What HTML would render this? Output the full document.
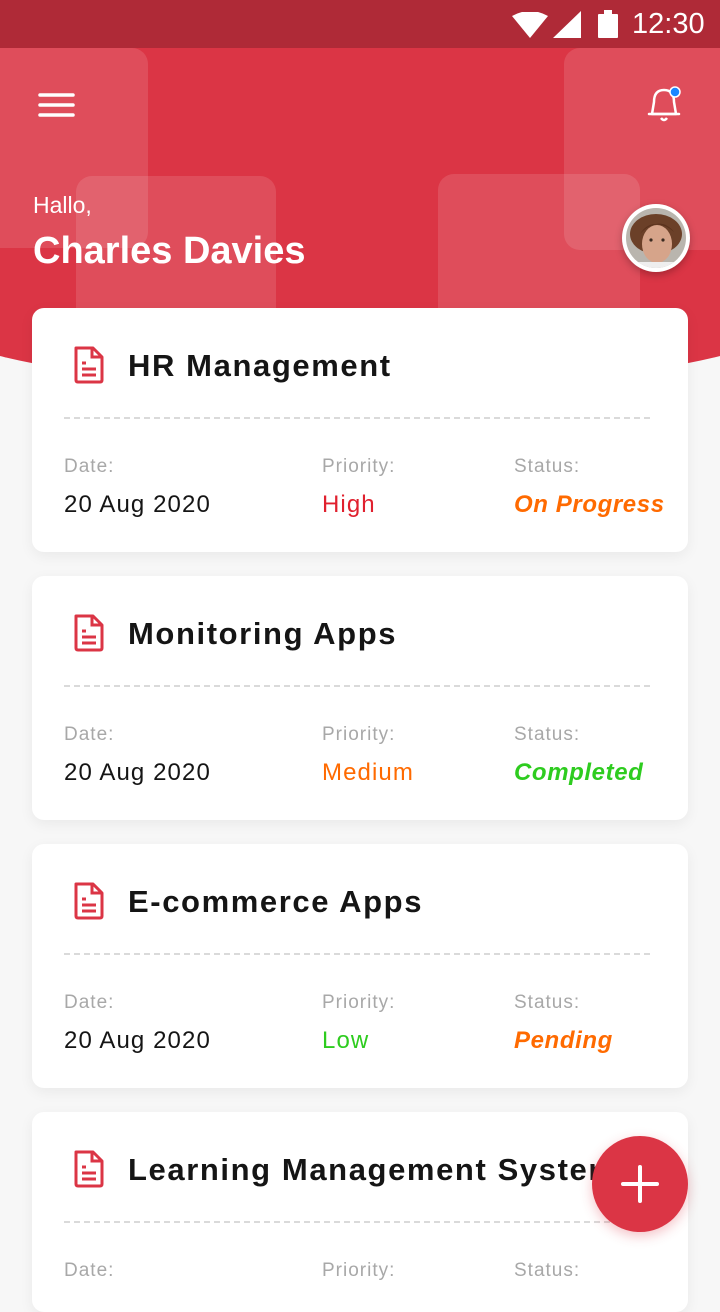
<!DOCTYPE html>
<html><head><meta charset="utf-8"><style>
*{margin:0;padding:0;box-sizing:border-box}
body{width:720px;height:1282px;overflow:hidden;background:#f7f7f7;font-family:"Liberation Sans",sans-serif;position:relative}
.status{position:absolute;left:0;top:0;width:720px;height:48px;background:#af2a37;z-index:5}
.hdr{position:absolute;left:-100px;top:0;width:920px;height:390px;background:#db3545;border-radius:0 0 460px 460px/0 0 90px 90px;overflow:hidden}
.dec{position:absolute;background:rgba(255,255,255,0.12);border-radius:16px}
.card{position:absolute;left:32px;width:656px;height:244px;background:#fff;border-radius:12px;box-shadow:0 4px 14px rgba(0,0,0,0.06)}
.card .ic{position:absolute;left:40px;top:38px}
.card h2{position:absolute;left:96px;top:40px;font-size:31px;font-weight:bold;color:#151515;white-space:nowrap;letter-spacing:1.6px}
.card .dash{position:absolute;left:32px;right:38px;top:109px;border-top:2px dashed #dadada}
.lab{position:absolute;top:148px;font-size:19px;color:#a8a8a8;letter-spacing:1px}
.val{position:absolute;top:183px;font-size:24px;color:#151515;letter-spacing:1.1px}
.it{font-style:italic;font-weight:bold;letter-spacing:0.6px}
</style></head><body>
<div class="hdr">
 <div class="dec" style="left:88px;top:48px;width:160px;height:200px;border-radius:0 16px 16px 0"></div>
 <div class="dec" style="left:176px;top:176px;width:200px;height:260px"></div>
 <div class="dec" style="left:538px;top:174px;width:202px;height:260px"></div>
 <div class="dec" style="left:664px;top:48px;width:260px;height:202px"></div>
</div>
<div class="status">
 <svg style="position:absolute;left:512px;top:12px" width="40" height="26" viewBox="0 0 40 26"><path d="M0 4 Q18 -6 36 4 L18 26Z" fill="#fff"/></svg>
 <svg style="position:absolute;left:553px;top:11px" width="30" height="28"><path d="M28 0 V27 H0Z" fill="#fff"/></svg>
 <div style="position:absolute;left:598px;top:14px;width:20px;height:24px;background:#fff;border-radius:1px"></div>
 <div style="position:absolute;left:604px;top:10px;width:8px;height:5px;background:#fff"></div>
 <div style="position:absolute;left:632px;top:8px;color:#fff;font-size:29px">12:30</div>
</div>
<svg style="position:absolute;left:38px;top:92px" width="38" height="26"><g stroke="#fff" stroke-width="3.5" stroke-linecap="round"><line x1="2" y1="3" x2="35" y2="3"/><line x1="2" y1="13" x2="35" y2="13"/><line x1="2" y1="23" x2="35" y2="23"/></g></svg>
<svg style="position:absolute;left:644px;top:82px" width="44" height="42" viewBox="0 0 44 42"><path d="M20 8 Q10 8 10 20 L8 32 H32 L30 20 Q30 8 20 8Z" fill="none" stroke="#fff" stroke-width="2.5" stroke-linejoin="round"/><path d="M5 32 H35" stroke="#fff" stroke-width="2.5" stroke-linecap="round"/><path d="M17 36 Q20 40 23 36" fill="none" stroke="#fff" stroke-width="2.5"/><circle cx="31" cy="10" r="5" fill="#1a86ff" stroke="#fff" stroke-width="1.5"/></svg>
<div style="position:absolute;left:33px;top:192px;color:#fff;font-size:23px">Hallo,</div>
<div style="position:absolute;left:33px;top:230px;color:#fff;font-size:38px;font-weight:bold">Charles Davies</div>
<div style="position:absolute;left:622px;top:204px;width:68px;height:68px;border-radius:50%;background:#fff;box-shadow:0 3px 8px rgba(0,0,0,0.25)">
 <svg style="position:absolute;left:4px;top:4px" width="60" height="60" viewBox="0 0 60 60"><clipPath id="c"><circle cx="30" cy="30" r="30"/></clipPath><g clip-path="url(#c)"><rect width="60" height="60" fill="#b9b5ae"/><ellipse cx="30" cy="26" rx="26" ry="20" fill="#6b4028"/><ellipse cx="31" cy="36" rx="15" ry="19" fill="#d6a48a"/><path d="M14 26 Q30 8 48 24 Q40 14 30 16 Q20 16 14 26Z" fill="#5a321d"/><circle cx="25" cy="32" r="1.6" fill="#3a2a20"/><circle cx="37" cy="32" r="1.6" fill="#3a2a20"/><rect x="0" y="54" width="60" height="6" fill="#eee"/></g></svg>
</div>

<div class="card" style="top:308px">
 <svg class="ic" width="34" height="38" viewBox="0 0 34 38"><path d="M4 2 H21 L30 11 V34 Q30 36 28 36 H6 Q4 36 4 34Z" fill="none" stroke="#db3545" stroke-width="3" stroke-linejoin="round"/><path d="M20 2 V11 H30" fill="none" stroke="#db3545" stroke-width="3"/><g stroke="#db3545" stroke-width="3"><line x1="10" y1="17" x2="14" y2="17"/><line x1="10" y1="23" x2="24" y2="23"/><line x1="10" y1="29" x2="24" y2="29"/></g></svg>
 <h2>HR Management</h2><div class="dash"></div>
 <div class="lab" style="left:32px">Date:</div><div class="lab" style="left:290px">Priority:</div><div class="lab" style="left:482px">Status:</div>
 <div class="val" style="left:32px">20 Aug 2020</div><div class="val" style="left:290px;color:#e0202e">High</div><div class="val it" style="left:482px;color:#ff6a00">On Progress</div>
</div>
<div class="card" style="top:576px">
 <svg class="ic" width="34" height="38" viewBox="0 0 34 38"><path d="M4 2 H21 L30 11 V34 Q30 36 28 36 H6 Q4 36 4 34Z" fill="none" stroke="#db3545" stroke-width="3" stroke-linejoin="round"/><path d="M20 2 V11 H30" fill="none" stroke="#db3545" stroke-width="3"/><g stroke="#db3545" stroke-width="3"><line x1="10" y1="17" x2="14" y2="17"/><line x1="10" y1="23" x2="24" y2="23"/><line x1="10" y1="29" x2="24" y2="29"/></g></svg>
 <h2>Monitoring Apps</h2><div class="dash"></div>
 <div class="lab" style="left:32px">Date:</div><div class="lab" style="left:290px">Priority:</div><div class="lab" style="left:482px">Status:</div>
 <div class="val" style="left:32px">20 Aug 2020</div><div class="val" style="left:290px;color:#ff6a00">Medium</div><div class="val it" style="left:482px;color:#2ecc1f">Completed</div>
</div>
<div class="card" style="top:844px">
 <svg class="ic" width="34" height="38" viewBox="0 0 34 38"><path d="M4 2 H21 L30 11 V34 Q30 36 28 36 H6 Q4 36 4 34Z" fill="none" stroke="#db3545" stroke-width="3" stroke-linejoin="round"/><path d="M20 2 V11 H30" fill="none" stroke="#db3545" stroke-width="3"/><g stroke="#db3545" stroke-width="3"><line x1="10" y1="17" x2="14" y2="17"/><line x1="10" y1="23" x2="24" y2="23"/><line x1="10" y1="29" x2="24" y2="29"/></g></svg>
 <h2>E-commerce Apps</h2><div class="dash"></div>
 <div class="lab" style="left:32px">Date:</div><div class="lab" style="left:290px">Priority:</div><div class="lab" style="left:482px">Status:</div>
 <div class="val" style="left:32px">20 Aug 2020</div><div class="val" style="left:290px;color:#2ecc1f">Low</div><div class="val it" style="left:482px;color:#ff6a00">Pending</div>
</div>
<div class="card" style="top:1112px;height:200px;overflow:hidden">
 <svg class="ic" width="34" height="38" viewBox="0 0 34 38"><path d="M4 2 H21 L30 11 V34 Q30 36 28 36 H6 Q4 36 4 34Z" fill="none" stroke="#db3545" stroke-width="3" stroke-linejoin="round"/><path d="M20 2 V11 H30" fill="none" stroke="#db3545" stroke-width="3"/><g stroke="#db3545" stroke-width="3"><line x1="10" y1="17" x2="14" y2="17"/><line x1="10" y1="23" x2="24" y2="23"/><line x1="10" y1="29" x2="24" y2="29"/></g></svg>
 <h2>Learning Management System</h2><div class="dash"></div>
 <div class="lab" style="left:32px">Date:</div><div class="lab" style="left:290px">Priority:</div><div class="lab" style="left:482px">Status:</div>
</div>
<div style="position:absolute;left:592px;top:1136px;width:96px;height:96px;border-radius:50%;background:#db3545;box-shadow:0 4px 12px rgba(219,53,69,0.3)">
 <svg style="position:absolute;left:28px;top:28px" width="40" height="40"><g stroke="#fff" stroke-width="4" stroke-linecap="round"><line x1="20" y1="3" x2="20" y2="37"/><line x1="3" y1="20" x2="37" y2="20"/></g></svg>
</div>
</body></html>
